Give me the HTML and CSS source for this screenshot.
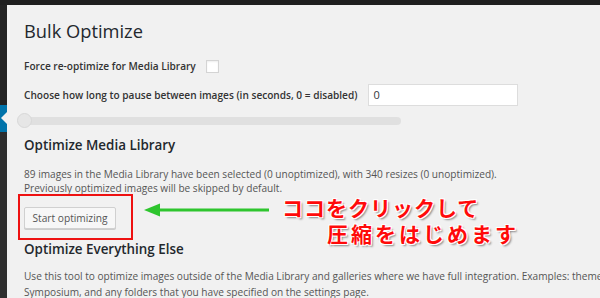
FILE: index.html
```html
<!DOCTYPE html>
<html lang="en">
<head>
<meta charset="utf-8">
<link rel="stylesheet" href="styles.css">
</head>
<body>
<div class="topbar"></div>
<div class="layout">
  <div class="sidebar">
    <div class="side-top"></div>
    <div class="side-current"><span class="notch"></span></div>
    <div class="side-bottom"></div>
  </div>
  <main class="content">
    <h1 class="title">Bulk Optimize</h1>
    <div class="row row-force">
      <label class="label">Force re-optimize for Media Library</label>
      <span class="checkbox"></span>
    </div>
    <div class="row row-pause">
      <label class="label">Choose how long to pause between images (in seconds, 0 = disabled)</label>
      <span class="input">0</span>
    </div>
    <div class="slider"><span class="handle"></span></div>
    <h2 class="section">Optimize Media Library</h2>
    <p class="desc">89 images in the Media Library have been selected (0 unoptimized), with 340 resizes (0 unoptimized).<br>Previously optimized images will be skipped by default.</p>
    <div class="action">
      <button class="btn">Start optimizing</button>
      <span class="redbox"></span>
      <svg class="arrow" width="130" height="14" viewBox="0 0 130 14">
        <path d="M14 7 H126" stroke="#2ec52e" stroke-width="3" fill="none"/>
        <path d="M1 7 L17 0.5 L17 13.5 Z" fill="#2ec52e"/>
      </svg>
      <div class="note">
        <div class="note-l1">ココをクリックして</div>
        <div class="note-l2">圧縮をはじめます</div>
      </div>
    </div>
    <h2 class="section section-2">Optimize Everything Else</h2>
    <p class="desc desc-2">Use this tool to optimize images outside of the Media Library and galleries where we have full integration. Examples: themes, BuddyPress,<br>Symposium, and any folders that you have specified on the settings page.</p>
  </main>
</div>
</body>
</html>
```
FILE: styles.css
```css
* { box-sizing: border-box; }
html, body { margin: 0; padding: 0; }
body {
  width: 600px;
  height: 298px;
  overflow: hidden;
  background: #23282d;
  font-family: "Open Sans", "Noto Sans", sans-serif;
  color: #444;
}
.topbar { height: 5px; background: #1f1f1f; }
.layout { display: flex; height: 293px; }
.sidebar { width: 7px; display: flex; flex-direction: column; background: #2b2b2b; }
.side-top { height: 100px; background: #232323; }
.side-current { height: 27px; background: #0073aa; position: relative; }
.notch {
  position: absolute; right: 0; top: 7px;
  width: 0; height: 0;
  border-top: 6px solid transparent;
  border-bottom: 6px solid transparent;
  border-right: 6px solid #f1f1f1;
}
.side-bottom { flex: 1; background: #2e2e2e; }
.content {
  flex: 1;
  background: #f1f1f1;
  padding: 0 0 0 17px;
  overflow: hidden;
  white-space: nowrap;
}
.title {
  margin: 0;
  padding-top: 14px;
  font-size: 18.3px;
  font-weight: 400;
  line-height: 24px;
  color: #23282d;
}
.row { display: flex; align-items: center; }
.label { font-size: 10.1px; font-weight: 600; color: #333; }
.row-force { margin-top: 16px; height: 14px; gap: 10px; }
.checkbox {
  width: 13px; height: 13px;
  background: #fff;
  border: 1px solid #d4d4d4;
  box-shadow: inset 0 1px 2px rgba(0,0,0,0.07);
}
.row-pause { margin-top: 11px; gap: 11px; height: 22px; }
.input {
  width: 150px; height: 22px;
  background: #fff;
  border: 1px solid #ddd;
  font-size: 11px;
  line-height: 20px;
  padding-left: 4px;
  color: #32373c;
}
.slider {
  margin: 11px 0 0 -6px;
  width: 383px; height: 8px;
  background: #e0e0e0;
  border-radius: 4px;
  position: relative;
}
.handle {
  position: absolute; left: -1px; top: -4px;
  width: 15px; height: 15px;
  border-radius: 50%;
  background: #e6e6e6;
  border: 1px solid #d8d8d8;
}
.section {
  margin: 11px 0 0;
  font-size: 13.4px;
  font-weight: 600;
  line-height: 18px;
  color: #23282d;
}
.desc {
  margin: 13px 0 0;
  font-size: 10.1px;
  line-height: 14px;
  color: #555;
}
.action { position: relative; height: 45px; padding: 12px 0 0 0; }
.btn {
  display: block;
  height: 22px;
  width: 92px;
  padding: 0;
  font-family: inherit;
  font-size: 10.2px;
  color: #555;
  background: #f7f7f7;
  border: 1px solid #d0d0d0;
  border-radius: 2px;
  box-shadow: 0 1px 0 #ccc;
}
.redbox {
  position: absolute; left: -6px; top: -1px;
  width: 115px; height: 46px;
  border: 2px solid #ee1111;
}
.arrow { position: absolute; left: 119px; top: 8px; }
.note {
  position: absolute; left: 258px; top: -1px;
  font-family: "Noto Sans CJK JP", sans-serif;
  font-weight: 700;
  font-size: 21px;
  line-height: 26px;
  color: #ff0a0a;
  text-shadow: 1px 1px 0 #fff, -1px -1px 0 #fff, 1px -1px 0 #fff, -1px 1px 0 #fff, 2px 2px 2px #888;
}
.note-l1 { letter-spacing: 1px; }
.note-l2 { padding-left: 45px; letter-spacing: 3px; }
.section-2 { margin-top: 0; }
.desc-2 { margin-top: 10px; line-height: 16px; }
```
